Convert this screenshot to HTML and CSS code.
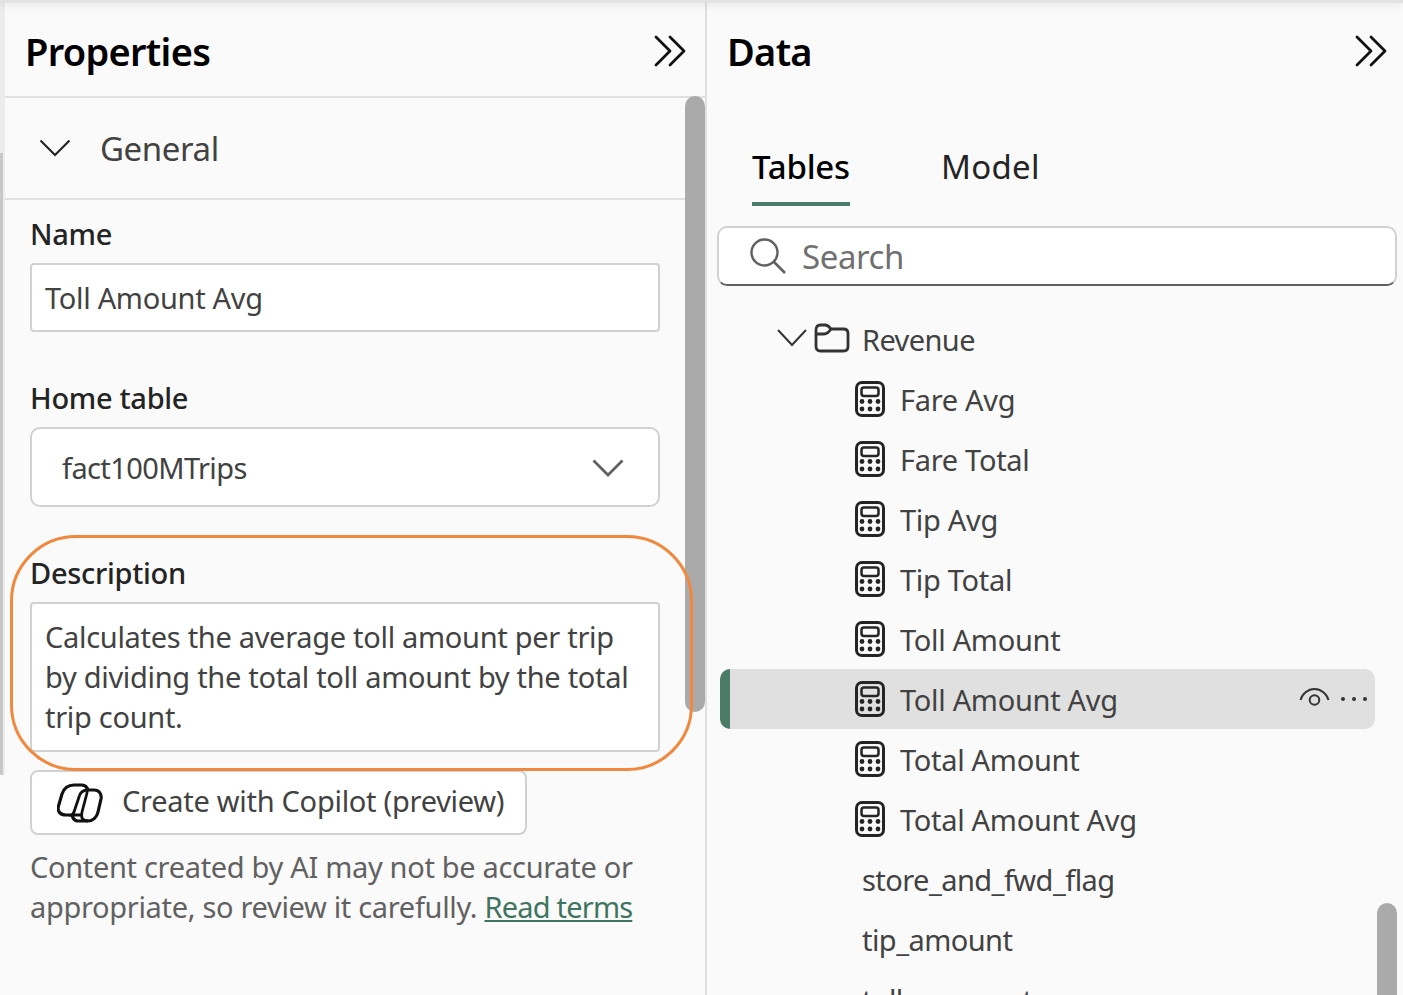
FILE: index.html
```html
<!DOCTYPE html>
<html lang="en">
<head>
  <meta charset="UTF-8" />
  <title>Properties and Data</title>
  <link rel="stylesheet" href="styles.css">
</head>
<body>
  <svg class="defs" width="0" height="0">
    <symbol id="calc" viewBox="0 0 30 36">
      <rect x="1.500" y="1.500" width="27" height="33" rx="5.500" fill="none" stroke="currentColor" stroke-width="3"/>
      <rect x="6.500" y="6.500" width="17" height="8.500" rx="2.500" fill="none" stroke="currentColor" stroke-width="2.500"/>
      <circle cx="7" cy="20.500" r="2.400"/><circle cx="15" cy="20.500" r="2.400"/><circle cx="23" cy="20.500" r="2.400"/>
      <circle cx="7" cy="28" r="2.400"/><circle cx="15" cy="28" r="2.400"/><circle cx="23" cy="28" r="2.400"/>
    </symbol>
    <symbol id="collapse" viewBox="0 0 32 32">
      <path d="M2 2l14 14L2 30M16 2l14 14-14 14" fill="none" stroke="currentColor" stroke-width="2.800" stroke-linecap="round" stroke-linejoin="round"/>
    </symbol>
  </svg>

  <div class="strip"></div>

  <section class="panel props">
    <header class="panel-head">
      <h2>Properties</h2>
      <svg class="collapse"><use href="#collapse"/></svg>
    </header>
    <div class="group-head">
      <svg class="group-chevron" viewBox="0 0 32 18"><path d="M1.500 1.500L16 16 30.500 1.500" fill="none" stroke="currentColor" stroke-width="2.200"/></svg>
      <span>General</span>
    </div>
    <div class="form">
      <label class="field-label first">Name</label>
      <div class="input">Toll Amount Avg</div>

      <label class="field-label home">Home table</label>
      <div class="select">
        <span>fact100MTrips</span>
        <svg class="select-chevron" viewBox="0 0 32 18"><path d="M1.500 1.500L16 16 30.500 1.500" fill="none" stroke="currentColor" stroke-width="2.800"/></svg>
      </div>

      <label class="field-label desc">Description</label>
      <div class="textarea">Calculates the average toll amount per trip<br>by dividing the total toll amount by the total<br>trip count.</div>

      <button class="copilot">
        <svg class="copilot-icon" viewBox="0 0 46 40">
          <path d="M17 2H25C28 2 30 4 31 7H37C42 7 45 11 44 16L41 29C40 34 36 38 31 38H21C18 38 16 36 15 32H9C3 32 0 28 1.500 23L5 11C7 5 11 2 17 2Z" fill="none" stroke="currentColor" stroke-width="3.200" stroke-linejoin="round"/>
          <path d="M25 2C30 3 31 6 30 10L25 29C24 34 24 37 31 38M31 7C26 7 23 10 22 14L17 29C16 31 15 32 15 32H24" fill="none" stroke="currentColor" stroke-width="2.800"/>
        </svg>
        <span>Create with Copilot (preview)</span>
      </button>

      <p class="note">Content created by AI may not be accurate or<br>appropriate, so review it carefully. <a href="#">Read terms</a></p>
    </div>

    <div class="scrollbar props-scroll"></div>
    <div class="highlight"></div>
  </section>

  <section class="panel data">
    <header class="panel-head data-head">
      <h2>Data</h2>
      <svg class="collapse"><use href="#collapse"/></svg>
    </header>
    <div class="tabs">
      <span class="tab active">Tables</span>
      <span class="tab">Model</span>
    </div>
    <div class="search">
      <svg class="search-icon" viewBox="0 0 36 36"><circle cx="14.500" cy="14.500" r="13" fill="none" stroke="currentColor" stroke-width="2.400"/><path d="M24 24l11 11" stroke="currentColor" stroke-width="2.600"/></svg>
      <span>Search</span>
    </div>
    <ul class="tree">
      <li class="row folder">
        <svg class="tree-chevron" viewBox="0 0 30 18"><path d="M1 1l14 15L29 1" fill="none" stroke="currentColor" stroke-width="2"/></svg>
        <svg class="folder-icon" viewBox="0 0 36 30"><path d="M2 7C2 3.500 3.500 2 6.500 2H11C14 2 15 3.500 17 6H29.500C32.500 6 34 8 34 10.500V23.500C34 26.500 32.500 28 29.500 28H6.500C3.500 28 2 26.500 2 23.500ZM2 11H10C13 11 15 9 17 6" fill="none" stroke="currentColor" stroke-width="2.800"/></svg>
        <span>Revenue</span>
      </li>
      <li class="row measure"><svg class="calc"><use href="#calc"/></svg><span>Fare Avg</span></li>
      <li class="row measure"><svg class="calc"><use href="#calc"/></svg><span>Fare Total</span></li>
      <li class="row measure"><svg class="calc"><use href="#calc"/></svg><span>Tip Avg</span></li>
      <li class="row measure"><svg class="calc"><use href="#calc"/></svg><span>Tip Total</span></li>
      <li class="row measure"><svg class="calc"><use href="#calc"/></svg><span>Toll Amount</span></li>
      <li class="row measure selected">
        <svg class="calc"><use href="#calc"/></svg><span>Toll Amount Avg</span>
        <svg class="eye" viewBox="0 0 32 20"><path d="M1.500 13C3 7 9 2 15.500 2S28 7 29.500 13" fill="none" stroke="currentColor" stroke-width="2"/><circle cx="15.500" cy="13" r="4.800" fill="none" stroke="currentColor" stroke-width="2"/></svg>
        <svg class="more" viewBox="0 0 28 6"><circle cx="3" cy="3" r="2"/><circle cx="14" cy="3" r="2"/><circle cx="25" cy="3" r="2"/></svg>
      </li>
      <li class="row measure"><svg class="calc"><use href="#calc"/></svg><span>Total Amount</span></li>
      <li class="row measure"><svg class="calc"><use href="#calc"/></svg><span>Total Amount Avg</span></li>
      <li class="row column"><span>store_and_fwd_flag</span></li>
      <li class="row column"><span>tip_amount</span></li>
      <li class="row column"><span>tolls_amount</span></li>
    </ul>
    <div class="scrollbar data-scroll"></div>
  </section>
</body>
</html>
```
FILE: styles.css
```css
* {
  box-sizing: border-box;
}

html, body {
  margin: 0;
  padding: 0;
  height: 995px;
  overflow: hidden;
}

body {
  display: flex;
  position: relative;
  background: #fafafa;
  color: #242424;
  font-family: "Noto Sans", "Open Sans", sans-serif;
  font-size: 29px;
}

/* shadow from the toolbar above the panes */
body::before {
  content: '';
  position: absolute;
  left: 0;
  right: 0;
  top: 0;
  height: 3px;
  background: #e2e2e2;
  box-shadow: 0 1px 8px rgba(0, 0, 0, 0.16);
  z-index: 5;
}

.defs {
  position: absolute;
}

.strip {
  width: 5px;
  flex: none;
  background:
    linear-gradient(#c8c8c8, #c8c8c8) 0 153px / 3px 622px no-repeat,
    linear-gradient(to bottom, #ececec 775px, #fafafa 775px);
}

.panel {
  position: relative;
  height: 995px;
}

.props {
  width: 702px;
  flex: none;
  border-right: 2px solid #e0e0e0;
}

.data {
  flex: 1;
}

.panel-head {
  display: flex;
  justify-content: space-between;
  align-items: center;
  height: 95px;
  margin-top: 3px;
  padding: 3px 19px 0 20px;
  border-bottom: 2px solid #e0e0e0;
}

.panel-head h2 {
  margin: 0;
  color: #000;
  font-size: 38px;
  font-weight: 600;
  letter-spacing: -0.7px;
}

.data-head {
  border-bottom: none;
  padding: 1px 16px 0 20px;
}

.collapse {
  width: 32px;
  height: 32px;
  color: #111;
}

.group-head {
  display: flex;
  align-items: center;
  height: 102px;
  padding-left: 34px;
  border-bottom: 2px solid #e0e0e0;
  font-size: 33px;
  color: #424242;
  letter-spacing: -0.4px;
}

.group-chevron {
  width: 32px;
  height: 18px;
  margin-right: 29px;
  color: #242424;
}

.form {
  padding: 0 45px 0 25px;
}

.field-label {
  display: block;
  font-size: 29px;
  font-weight: 500;
  line-height: 40px;
  letter-spacing: -0.3px;
}

.field-label.first {
  margin-top: 14px;
  margin-bottom: 9px;
}

.field-label.home {
  margin-top: 46px;
  margin-bottom: 9px;
}

.field-label.desc {
  margin-top: 46px;
  margin-bottom: 9px;
}

.input, .textarea, .select {
  background: #fff;
  border: 2px solid #d1d1d1;
  border-radius: 4px;
  color: #424242;
}

.input {
  height: 69px;
  padding: 0 13px;
  line-height: 66px;
  letter-spacing: -0.3px;
}

.select {
  display: flex;
  justify-content: space-between;
  align-items: center;
  height: 80px;
  padding: 1px 34px 0 30px;
  border-radius: 10px;
  letter-spacing: -0.6px;
}

.select-chevron {
  width: 32px;
  height: 18px;
  margin-top: 1px;
  color: #616161;
}

.textarea {
  height: 150px;
  padding: 13px 13px;
  line-height: 40px;
  letter-spacing: -0.3px;
  white-space: nowrap;
}

.copilot {
  display: flex;
  align-items: center;
  width: 497px;
  height: 65px;
  margin-top: 18px;
  padding: 0 0 0 25px;
  background: #fff;
  border: 2px solid #d1d1d1;
  border-radius: 8px;
  color: #424242;
  font-family: inherit;
  font-size: 29px;
  letter-spacing: -0.28px;
}

.copilot span {
  margin-top: -4px;
}

.copilot-icon {
  width: 46px;
  height: 40px;
  margin-right: 19px;
  color: #111;
}

.note {
  margin: 12px 0 0;
  color: #616161;
  line-height: 40px;
  letter-spacing: -0.32px;
  white-space: nowrap;
}

.note a {
  color: #3f7560;
  letter-spacing: -0.8px;
}

/* hand-drawn callout round the description field */
.highlight {
  position: absolute;
  left: 5px;
  top: 535px;
  width: 683px;
  height: 236px;
  border: 3px solid #f0883e;
  border-radius: 66px;
}

.scrollbar {
  position: absolute;
  width: 20px;
  background: #aaa;
  border-radius: 10px;
}

.props-scroll {
  left: 680px;
  top: 96px;
  height: 616px;
}

.data-scroll {
  right: 6px;
  top: 903px;
  height: 140px;
}

.tabs {
  display: flex;
  gap: 91px;
  margin-top: 38px;
  padding-left: 45px;
  font-size: 33px;
  color: #242424;
}

.tab {
  height: 70px;
  line-height: 62px;
  letter-spacing: 0.3px;
}

.tab.active {
  color: #000;
  font-weight: 500;
  border-bottom: 4px solid #4a7c68;
  letter-spacing: -0.2px;
}

.search {
  display: flex;
  align-items: center;
  height: 60px;
  margin: 20px 6px 0 10px;
  padding-left: 31px;
  background: #fff;
  border: 2px solid #d1d1d1;
  border-bottom-color: #616161;
  border-radius: 10px;
  font-size: 33px;
  color: #707070;
  letter-spacing: -0.4px;
}

.search-icon {
  width: 36px;
  height: 36px;
  margin-right: 16px;
  color: #616161;
}

.tree {
  list-style: none;
  margin: 23px 0 0 13px;
  padding: 0;
  width: 655px;
}

.row {
  display: flex;
  align-items: center;
  position: relative;
  height: 60px;
  color: #424242;
  letter-spacing: -0.3px;
}

.row.measure {
  padding-left: 135px;
}

.row.column {
  padding-left: 142px;
  letter-spacing: -0.55px;
}

.row.folder {
  padding-left: 57px;
  letter-spacing: -0.6px;
}

.tree-chevron {
  width: 30px;
  height: 18px;
  margin-right: 7px;
  margin-top: -3px;
  color: #333;
}

.folder-icon {
  width: 36px;
  height: 30px;
  margin-right: 12px;
  margin-top: -2px;
  color: #333;
}

.calc {
  width: 30px;
  height: 36px;
  margin-right: 15px;
  color: #242424;
  fill: #242424;
}

.row.selected {
  background: #e0e0e0;
  border-radius: 10px;
  border-left: 10px solid #4a7c68;
  padding-left: 125px;
}

.eye {
  position: absolute;
  right: 44px;
  top: 18px;
  width: 32px;
  height: 20px;
  color: #333;
}

.more {
  position: absolute;
  right: 7px;
  top: 27px;
  width: 28px;
  height: 6px;
  fill: #333;
}
```
